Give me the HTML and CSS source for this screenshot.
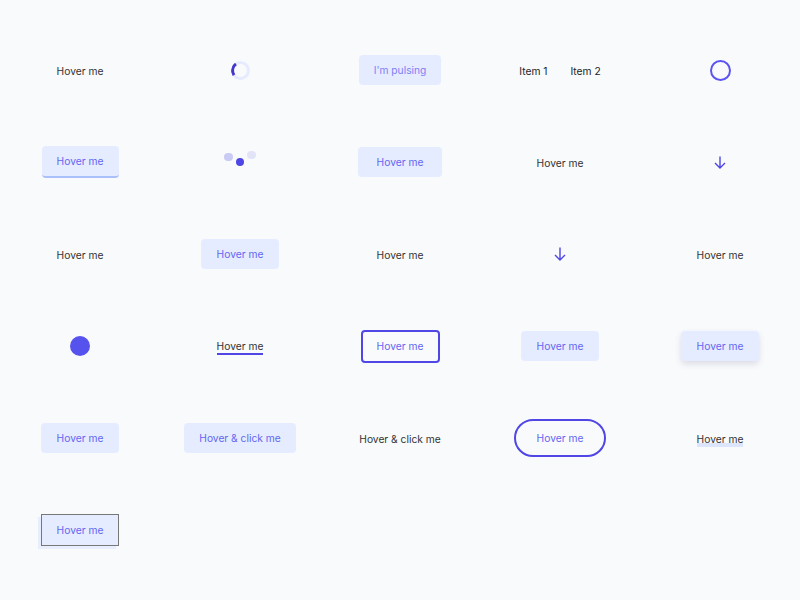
FILE: index.html
```html
<!DOCTYPE html>
<html>
<head>
<meta charset="utf-8">
<link rel="stylesheet" href="styles.css">
</head>
<body>
<div class="grid">
  <div class="cell"><span class="plain">Hover me</span></div>
  <div class="cell"><div class="spinner"></div></div>
  <div class="cell"><button class="btn pulse">I'm pulsing</button></div>
  <div class="cell"><nav class="nav"><span>Item 1</span><span>Item 2</span></nav></div>
  <div class="cell"><div class="ring"></div></div>

  <div class="cell"><button class="btn bottom-border">Hover me</button></div>
  <div class="cell"><div class="dots"><span class="dot d1"></span><span class="dot d2"></span><span class="dot d3"></span></div></div>
  <div class="cell"><button class="btn wide">Hover me</button></div>
  <div class="cell"><span class="plain">Hover me</span></div>
  <div class="cell"><svg class="arrow a1" width="12" height="13" viewBox="0 0 12 13"><path d="M6 0.5V12M1 7l5 5 5-5" fill="none" stroke="#4f46e5" stroke-width="1.4"/></svg></div>

  <div class="cell"><span class="plain">Hover me</span></div>
  <div class="cell"><button class="btn">Hover me</button></div>
  <div class="cell"><span class="plain">Hover me</span></div>
  <div class="cell"><svg class="arrow" width="12" height="14" viewBox="0 0 12 14"><path d="M6 0.5V13M1 8l5 5 5-5" fill="none" stroke="#4f46e5" stroke-width="1.4"/></svg></div>
  <div class="cell"><span class="plain">Hover me</span></div>

  <div class="cell"><div class="blob"></div></div>
  <div class="cell"><span class="plain underline">Hover me</span></div>
  <div class="cell"><button class="btn outline">Hover me</button></div>
  <div class="cell"><button class="btn">Hover me</button></div>
  <div class="cell"><button class="btn shadow">Hover me</button></div>

  <div class="cell"><button class="btn">Hover me</button></div>
  <div class="cell"><button class="btn">Hover &amp; click me</button></div>
  <div class="cell"><span class="plain">Hover &amp; click me</span></div>
  <div class="cell"><button class="btn pill">Hover me</button></div>
  <div class="cell"><span class="plain highlight">Hover me</span></div>

  <div class="cell"><button class="btn offset">Hover me</button></div>
</div>
</body>
</html>
```
FILE: styles.css
```css
* { box-sizing: border-box; }
html, body {
  margin: 0;
  background: #f9fafc;
  font-family: Inter, "Noto Sans", sans-serif;
  font-size: 10.25px;
}
.grid {
  display: grid;
  grid-template-columns: repeat(5, 160px);
  grid-auto-rows: 92px;
  padding-top: 24px;
}
.cell {
  display: flex;
  align-items: center;
  justify-content: center;
}
.plain {
  color: #333;
  line-height: 14px;
  transform: translateY(1px);
}
.btn {
  font-family: inherit;
  font-size: 10.25px;
  line-height: 14px;
  color: #6366f1;
  background: #e6ecff;
  border: none;
  border-radius: 4px;
  padding: 8px 15.5px;
  height: 30px;
}
.pulse { color: #7d7ff5; width: 82px; padding: 8px 0; }
.wide { width: 84px; padding: 8px 0; }
.bottom-border {
  height: 32px;
  width: 77px;
  padding: 0;
  border-bottom: 2px solid #a9c0fb;
}
.outline {
  background: transparent;
  border: 2px solid #4f46e5;
  height: 33px;
  width: 79px;
  padding: 0;
}
.shadow {
  box-shadow: 0 3px 6px rgba(60, 60, 100, 0.15);
  width: 78px;
  padding: 0;
}
.pill {
  background: transparent;
  border: 2px solid #4f46e5;
  border-radius: 19px;
  height: 38px;
  width: 92px;
  padding: 0;
}
.offset {
  border: 1px solid #777;
  border-radius: 0;
  box-shadow: -3px 3px 0 #e9eeff;
  height: 32px;
  width: 78px;
  padding: 0;
}
.spinner {
  width: 19px;
  height: 19px;
  border-radius: 50%;
  border: 3px solid #e6ebff;
  border-left-color: #4338ca;
  transform: rotate(10deg);
}
.nav {
  display: flex;
  gap: 23px;
  color: #222;
  line-height: 14px;
  transform: translateY(1px);
}
.ring {
  width: 21px;
  height: 21px;
  border-radius: 50%;
  border: 2px solid #5b54f0;
}
.dots {
  display: flex;
  gap: 3px;
  align-items: center;
  height: 20px;
}
.dot {
  width: 8.5px;
  height: 8.5px;
  border-radius: 50%;
  display: block;
}
.d1 { background: #c9cbf4; transform: translateY(-5px); }
.d2 { background: #4f46e5; transform: translateY(0px); }
.d3 { background: #e2e3f6; transform: translateY(-7px); }
.blob {
  width: 20px;
  height: 20px;
  border-radius: 50%;
  background: #5652ee;
}
.underline {
  border-bottom: 2px solid #4f46e5;
  line-height: 14px;
}
.highlight {
  background: linear-gradient(#dce5fb, #dce5fb) no-repeat left bottom / 100% 4px;
  padding-bottom: 1px;
}
```
